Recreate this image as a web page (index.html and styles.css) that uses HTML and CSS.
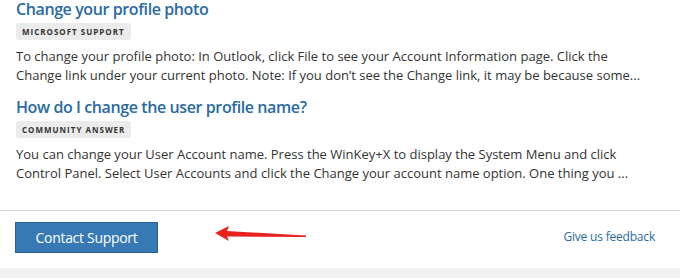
FILE: index.html
```html
<!DOCTYPE html>
<html lang="en">
<head>
    <meta charset="UTF-8">
    <title>Help results</title>
    <link rel="stylesheet" href="styles.css">
</head>
<body>
    <div class="results">
        <div class="result">
            <a class="result-title" href="#">Change your profile photo</a>
            <div class="result-source">Microsoft Support</div>
            <p class="result-text">To change your profile photo: In Outlook, click File to see your Account Information page. Click the Change link under your current photo. Note: If you don’t see the Change link, it may be because some...</p>
        </div>
        <div class="result">
            <a class="result-title" href="#">How do I change the user profile name?</a>
            <div class="result-source">Community Answer</div>
            <p class="result-text">You can change your User Account name. Press the WinKey+X to display the System Menu and click Control Panel. Select User Accounts and click the Change your account name option. One thing you ...</p>
        </div>
    </div>

    <div class="footer">
        <button class="contact-btn">Contact Support</button>
        <svg class="arrow" width="92" height="18" viewBox="0 0 92 18">
            <path d="M0 7 L14 0 L12 5 L91 9.5 L91 11 L12 10.5 L14 15 Z" fill="#e8231f"/>
        </svg>
        <a class="feedback" href="#">Give us feedback</a>
    </div>
    <div class="bottom-band"></div>
</body>
</html>
```

FILE: styles.css
```css
* {
    margin: 0;
    padding: 0;
    box-sizing: border-box;
}

body {
    font-family: 'Open Sans', 'Noto Sans', sans-serif;
    color: #333;
    background: #fff;
    width: 680px;
    height: 278px;
    overflow: hidden;
}

.results {
    padding: 0 24px 0 16px;
    height: 210px;
}

.result {
    margin-bottom: 13px;
}

.result-title {
    display: block;
    color: #2a6aa2;
    font-size: 16px;
    font-weight: 600;
    letter-spacing: -0.4px;
    text-decoration: none;
    line-height: 18px;
}

.result-source {
    display: inline-block;
    margin-top: 3px;
    background: #ebebeb;
    border-radius: 3px;
    padding: 0 6px;
    height: 17px;
    line-height: 17px;
    font-size: 8px;
    font-weight: 700;
    letter-spacing: 1px;
    text-transform: uppercase;
    color: #333;
}

.result-text {
    margin-top: 7px;
    font-size: 13px;
    line-height: 19px;
    color: #333;
}

.footer {
    border-top: 1px solid #d6d6d6;
    height: 58px;
    display: flex;
    align-items: flex-start;
    padding: 11px 25px 0 15px;
}

.contact-btn {
    width: 143px;
    height: 31px;
    background: #3679b5;
    border: 1px solid #2a5f8f;
    color: #fff;
    font-family: inherit;
    font-size: 14px;
    letter-spacing: -0.3px;
}

.arrow {
    margin-left: 57px;
    margin-top: 4px;
}

.feedback {
    margin-left: auto;
    margin-top: 6px;
    color: #2a6aa2;
    font-size: 12px;
    letter-spacing: -0.2px;
    text-decoration: none;
}

.bottom-band {
    height: 10px;
    background: #f2f2f2;
}
```
